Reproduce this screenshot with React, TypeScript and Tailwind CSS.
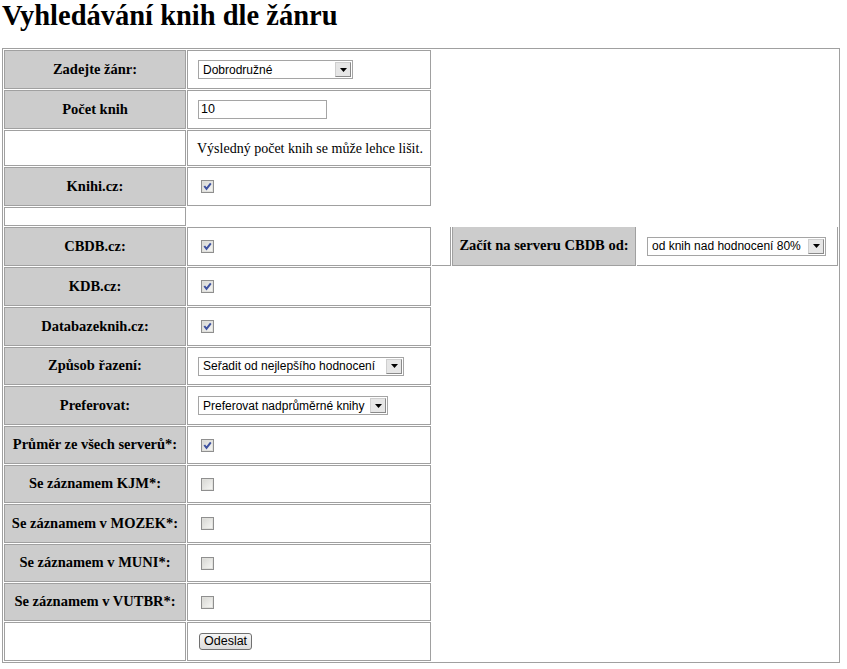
import React from "react";

function Check({ checked }: { checked?: boolean }) {
  return (
    <svg width="13" height="13" viewBox="0 0 13 13" className="ml-[3px] block">
      <defs>
        <linearGradient id="cbg" x1="0" y1="0" x2="1" y2="1">
          <stop offset="0" stopColor="#d4d4d0" />
          <stop offset="1" stopColor="#fafaf8" />
        </linearGradient>
      </defs>
      <rect x="0.5" y="0.5" width="12" height="12" fill="url(#cbg)" stroke="#8f8f8f" />
      <rect x="1.5" y="1.5" width="10" height="10" fill="none" stroke="#e0e0dc" />
      {checked && (
        <polyline points="3.3,6 5.5,8.8 9.8,3.3" fill="none" stroke="#3f52a0" strokeWidth="2" />
      )}
    </svg>
  );
}

function Select({ text, w }: { text: string; w: string }) {
  return (
    <div className={`${w} h-[19px] border border-[#a5a5a5] bg-white flex items-center justify-between`}>
      <span className="pl-[4px] font-['Liberation_Sans',sans-serif] text-[12px] leading-none text-black whitespace-nowrap">
        {text}
      </span>
      <div className="w-[16px] h-[15px] mr-[1px] border border-[#8a8a8a] border-t-[#cfcfcf] border-l-[#cfcfcf] bg-[#e6e6e6] flex items-center justify-center">
        <svg width="7" height="4" viewBox="0 0 7 4" className="block">
          <polygon points="0,0 7,0 3.5,4" fill="#000" />
        </svg>
      </div>
    </div>
  );
}

const labelCls =
  "w-[182px] shrink-0 bg-[#cccccc] border border-[#a0a0a0] flex items-center justify-center font-['Liberation_Serif',serif] font-bold text-[14.5px] text-black whitespace-nowrap";
const emptyLabelCls = "w-[182px] shrink-0 bg-white border border-[#a0a0a0]";
const valueCls = "w-[244px] shrink-0 border border-[#a0a0a0] flex items-center pl-[10px]";

function Row({ h, label, children }: { h: string; label?: string; children?: React.ReactNode }) {
  return (
    <div className={`flex gap-[1px] ${h}`}>
      {label ? <div className={labelCls}>{label}</div> : <div className={emptyLabelCls} />}
      <div className={valueCls}>{children}</div>
    </div>
  );
}

export default function App() {
  return (
    <div className="bg-white min-h-[669px] pl-[2px] text-black">
      <h1 className="m-0 font-['Liberation_Serif',serif] font-bold text-[28.5px] leading-[32px] mb-[16px] whitespace-nowrap">
        Vyhledávání knih dle žánru
      </h1>
      <div className="w-[838px] border border-[#a0a0a0] p-[1px] flex flex-col gap-[1px]">
        <Row h="h-[39px]" label="Zadejte žánr:">
          <Select text="Dobrodružné" w="w-[155px]" />
        </Row>
        <Row h="h-[39px]" label="Počet knih">
          <div className="w-[129px] h-[19px] border border-[#a5a5a5] bg-white flex items-center pl-[2px] font-['Liberation_Sans',sans-serif] text-[12.5px] leading-none">
            10
          </div>
        </Row>
        <Row h="h-[36px]">
          <span className="-ml-[1px] font-['Liberation_Serif',serif] text-[14px] whitespace-nowrap">
            Výsledný počet knih se může lehce lišit.
          </span>
        </Row>
        <Row h="h-[39px]" label="Knihi.cz:">
          <Check checked />
        </Row>
        <div className="flex h-[19px]">
          <div className={emptyLabelCls} />
        </div>
        <div className="flex gap-[1px] h-[39px]">
          <div className={labelCls}>CBDB.cz:</div>
          <div className={valueCls}>
            <Check checked />
          </div>
          <div className="w-[19px] shrink-0 border-r border-b border-[#a0a0a0]" />
          <div className="w-[184px] shrink-0 bg-[#cccccc] border-l border-r border-b border-[#a0a0a0] flex items-center justify-center font-['Liberation_Serif',serif] font-bold text-[14.5px] whitespace-nowrap">
            Začít na serveru CBDB od:
          </div>
          <div className="w-[201px] shrink-0 border-r border-b border-[#a0a0a0] flex items-center pl-[10px]">
            <Select text="od knih nad hodnocení 80%" w="w-[179px]" />
          </div>
        </div>
        <Row h="h-[39px]" label="KDB.cz:">
          <Check checked />
        </Row>
        <Row h="h-[39px]" label="Databazeknih.cz:">
          <Check checked />
        </Row>
        <Row h="h-[38px]" label="Způsob řazení:">
          <Select text="Seřadit od nejlepšího hodnocení" w="w-[206px]" />
        </Row>
        <Row h="h-[39px]" label="Preferovat:">
          <Select text="Preferovat nadprůměrné knihy" w="w-[190px]" />
        </Row>
        <Row h="h-[38px]" label="Průměr ze všech serverů*:">
          <Check checked />
        </Row>
        <Row h="h-[38px]" label="Se záznamem KJM*:">
          <Check />
        </Row>
        <Row h="h-[39px]" label="Se záznamem v MOZEK*:">
          <Check />
        </Row>
        <Row h="h-[38px]" label="Se záznamem v MUNI*:">
          <Check />
        </Row>
        <Row h="h-[38px]" label="Se záznamem v VUTBR*:">
          <Check />
        </Row>
        <Row h="h-[39px]">
          <button className="ml-[1px] h-[17px] px-[4px] border border-[#707070] rounded-[3px] bg-gradient-to-b from-[#f6f6f6] to-[#dcdcdc] font-['Liberation_Sans',sans-serif] text-[12.5px] leading-none text-black">
            Odeslat
          </button>
        </Row>
      </div>
    </div>
  );
}
